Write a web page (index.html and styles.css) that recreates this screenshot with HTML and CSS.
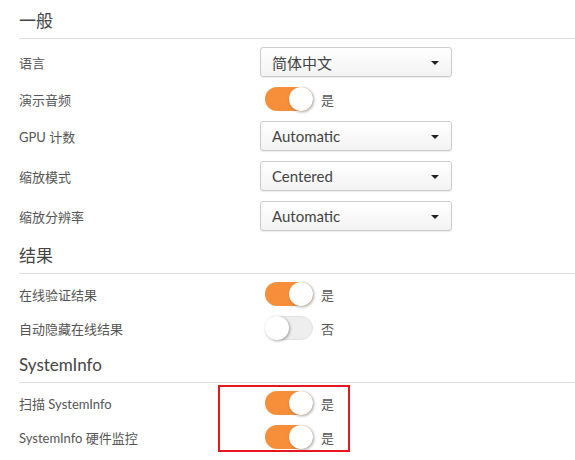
FILE: index.html
```html
<!DOCTYPE html>
<html lang="zh-CN">
<head>
    <meta charset="UTF-8">
    <meta name="viewport" content="width=device-width, initial-scale=1.0">
    <title>设置</title>
    <link rel="stylesheet" href="styles.css">
</head>
<body>
    <div class="settings">
        <section class="group">
            <h2 class="group-title">一般</h2>
            <div class="rows">
                <div class="row">
                    <span class="label">语言</span>
                    <div class="select"><span class="select-text">简体中文</span><span class="caret"></span></div>
                </div>
                <div class="row">
                    <span class="label">演示音频</span>
                    <div class="switch-wrap"><span class="switch on"><span class="knob"></span></span><span class="value">是</span></div>
                </div>
                <div class="row">
                    <span class="label">GPU 计数</span>
                    <div class="select"><span class="select-text">Automatic</span><span class="caret"></span></div>
                </div>
                <div class="row">
                    <span class="label">缩放模式</span>
                    <div class="select"><span class="select-text">Centered</span><span class="caret"></span></div>
                </div>
                <div class="row">
                    <span class="label">缩放分辨率</span>
                    <div class="select"><span class="select-text">Automatic</span><span class="caret"></span></div>
                </div>
            </div>
        </section>

        <section class="group">
            <h2 class="group-title">结果</h2>
            <div class="rows">
                <div class="row">
                    <span class="label">在线验证结果</span>
                    <div class="switch-wrap"><span class="switch on"><span class="knob"></span></span><span class="value">是</span></div>
                </div>
                <div class="row">
                    <span class="label">自动隐藏在线结果</span>
                    <div class="switch-wrap"><span class="switch off"><span class="knob"></span></span><span class="value">否</span></div>
                </div>
            </div>
        </section>

        <section class="group">
            <h2 class="group-title">SystemInfo</h2>
            <div class="rows highlight">
                <div class="row">
                    <span class="label">扫描 SystemInfo</span>
                    <div class="switch-wrap"><span class="switch on"><span class="knob"></span></span><span class="value">是</span></div>
                </div>
                <div class="row">
                    <span class="label">SystemInfo 硬件监控</span>
                    <div class="switch-wrap"><span class="switch on"><span class="knob"></span></span><span class="value">是</span></div>
                </div>
            </div>
        </section>
    </div>
</body>
</html>
```

FILE: styles.css
```css
body {
    margin: 0;
    background: #fff;
    font-family: Lato, "Noto Sans CJK SC", sans-serif;
    color: #555;
}
.settings {
    padding-left: 19px;
}
.group-title {
    margin: 0;
    padding: 9px 0 5px;
    line-height: 24px;
    font-size: 17px;
    font-weight: normal;
    color: #444;
    border-bottom: 1px solid #ddd;
}
.rows {
    display: flex;
    flex-direction: column;
    gap: 10px;
    margin: 8px 0 4px;
}
.row {
    display: grid;
    grid-template-columns: 241px 192px;
    align-items: center;
}
.label {
    font-size: 13px;
    color: #555;
}

.select {
    height: 30px;
    box-sizing: border-box;
    display: flex;
    align-items: center;
    justify-content: space-between;
    padding: 0 12px 0 11px;
    border: 1px solid #ccc;
    border-radius: 3px;
    background: linear-gradient(#fff, #f3f3f3);
    box-shadow: 0 1px 1px rgba(0, 0, 0, 0.08);
}
.select-text {
    font-size: 15px;
    color: #444;
}
.caret {
    width: 0;
    height: 0;
    border-left: 4px solid transparent;
    border-right: 4px solid transparent;
    border-top: 4px solid #222;
    margin-top: 2px;
}

.switch-wrap {
    display: flex;
    align-items: center;
    padding-left: 5px;
}
.switch {
    width: 48px;
    height: 24px;
    box-sizing: border-box;
    border-radius: 12px;
    display: flex;
    align-items: center;
}
.switch.on {
    background: #f78e39;
    justify-content: flex-end;
}
.switch.off {
    background: #eee;
    border: 1px solid #e2e2e2;
    justify-content: flex-start;
}
.knob {
    width: 24px;
    height: 24px;
    border-radius: 50%;
    background: #fff;
    box-shadow: 1px 1px 3px rgba(0, 0, 0, 0.35);
}
.switch.off .knob {
    margin-left: -1px;
}
.value {
    margin-left: 8px;
    font-size: 13px;
    color: #555;
}

.highlight {
    position: relative;
}
.highlight::after {
    content: "";
    position: absolute;
    top: -6px;
    bottom: -3px;
    left: 199px;
    width: 132px;
    box-sizing: border-box;
    border: 2px solid #e8161e;
    pointer-events: none;
}
```
